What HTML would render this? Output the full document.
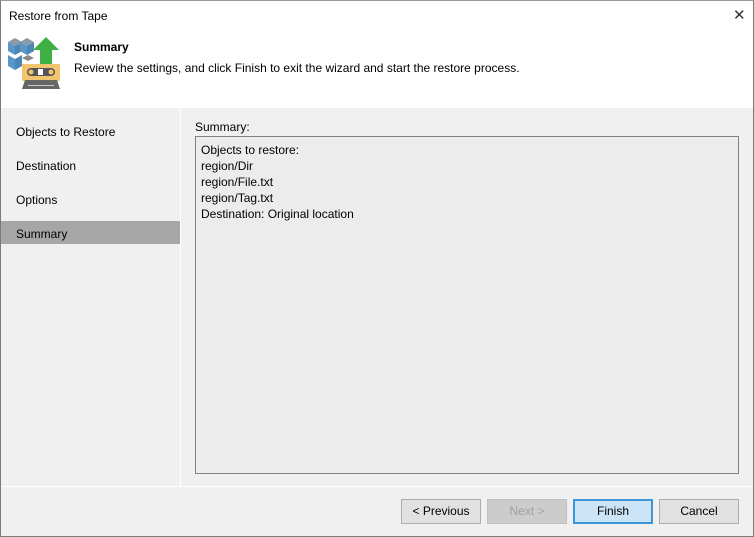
<!DOCTYPE html>
<html><head><style>
*{margin:0;padding:0;box-sizing:border-box}
body{width:754px;height:537px;overflow:hidden;font-family:"Liberation Sans",sans-serif;font-size:12px;color:#000;background:#f0f0f0;position:relative}
.abs{position:absolute}
.win{left:0;top:0;width:754px;height:537px;border:1px solid #7a7a7a;border-top:1px solid #9a9a9a}
.btn{position:absolute;top:499px;height:25px;border:1px solid #adadad;background:#e1e1e1;text-align:center;line-height:23px;font-size:12px}
</style></head><body>
<div class="abs" style="left:0;top:0;width:754px;height:108px;background:#fff"></div>
<div class="abs" style="left:9px;top:9px;font-size:12px">Restore from Tape</div>
<div class="abs" style="left:733px;top:6px;font-size:15px;color:#333">✕</div>
<svg class="abs" style="left:0;top:0" width="70" height="95" viewBox="0 0 70 95">
<polygon points="8,42 15,38 22,42 15,46" fill="#8a9aa8"/>
<polygon points="8,42 15,46 15,55 8,51" fill="#5a96c8"/>
<polygon points="15,46 22,42 22,51 15,55" fill="#4a86b8"/>
<polygon points="20,42 27,38 34,42 27,46" fill="#8a9aa8"/>
<polygon points="20,42 27,46 27,55 20,51" fill="#5a96c8"/>
<polygon points="27,46 34,42 34,51 27,55" fill="#4a86b8"/>
<polygon points="8,55 15,59 15,70 8,66" fill="#5a96c8"/>
<polygon points="15,59 22,55 22,66 15,70" fill="#4a86b8"/>
<polygon points="22,58 28,55 34,58 28,61" fill="#8a8a8a"/>
<polygon points="46,37 59,50 52,50 52,65 40,65 40,50 33,50" fill="#3cb043"/>
<rect x="22" y="64" width="38" height="17" rx="1" fill="#f2c46d"/>
<rect x="27" y="68" width="28" height="8" rx="4" fill="#555"/>
<circle cx="31" cy="72" r="2.5" fill="#f2c46d"/><circle cx="51" cy="72" r="2.5" fill="#f2c46d"/>
<rect x="38" y="69" width="5" height="6" fill="#fff"/>
<polygon points="22,89 25,80 57,80 60,89" fill="#666"/>
<rect x="28" y="85" width="26" height="1" fill="#ccc"/>
</svg>
<div class="abs" style="left:74px;top:40px;font-weight:bold">Summary</div>
<div class="abs" style="left:74px;top:61px">Review the settings, and click Finish to exit the wizard and start the restore process.</div>
<div class="abs" style="left:180px;top:108px;width:1px;height:378px;background:#fff"></div>
<div class="abs" style="left:16px;top:125px">Objects to Restore</div>
<div class="abs" style="left:16px;top:159px">Destination</div>
<div class="abs" style="left:16px;top:193px">Options</div>
<div class="abs" style="left:0;top:221px;width:180px;height:23px;background:#a6a6a6"></div>
<div class="abs" style="left:16px;top:227px">Summary</div>
<div class="abs" style="left:195px;top:120px">Summary:</div>
<div class="abs" style="left:195px;top:136px;width:544px;height:338px;border:1px solid #828282;background:#ececec;padding:5px 0 0 5px;line-height:16px">Objects to restore:<br>region/Dir<br>region/File.txt<br>region/Tag.txt<br>Destination: Original location</div>
<div class="abs" style="left:0;top:486px;width:754px;height:1px;background:#fff"></div>
<div class="btn" style="left:401px;width:80px">&lt; Previous</div>
<div class="btn" style="left:487px;width:80px;background:#cccccc;border-color:#bfbfbf;color:#a0a0a0">Next &gt;</div>
<div class="btn" style="left:573px;width:80px;background:#cce4f7;border:2px solid #3c95d8;line-height:21px">Finish</div>
<div class="btn" style="left:659px;width:80px">Cancel</div>
<div class="abs win"></div>
</body></html>
